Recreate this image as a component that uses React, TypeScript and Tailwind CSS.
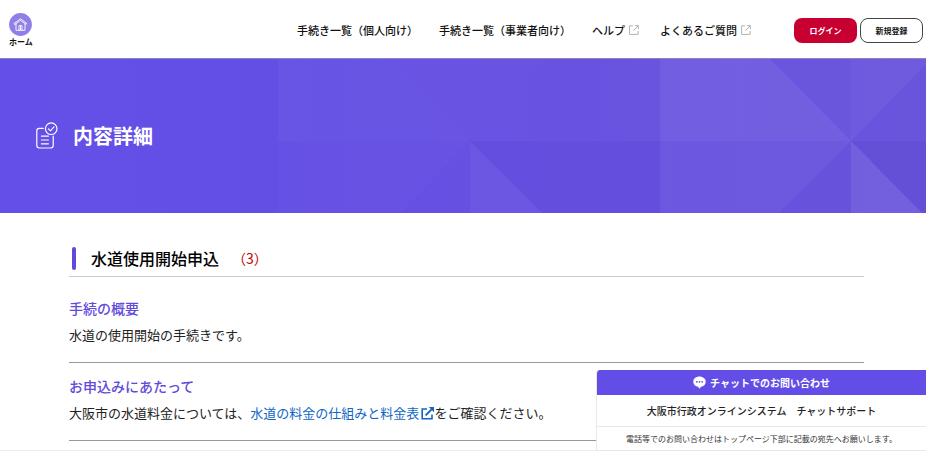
import { ReactNode } from "react"

const navLinks = [
    { label: "手続き一覧（個人向け）", external: false },
    { label: "手続き一覧（事業者向け）", external: false },
    { label: "ヘルプ", external: true },
    { label: "よくあるご質問", external: true },
]

const HomeIcon = () => (
    <svg className="size-[23px]" viewBox="0 0 23 23" fill="none" aria-hidden="true">
        <circle cx="11.5" cy="11.5" r="11.4" fill="#8f7fe6" />
        <g stroke="#fff" strokeWidth="0.9" strokeLinejoin="round" strokeLinecap="round">
            <path d="M5.2 10.4 11.5 5.8l6.3 4.6-.8 1-5.5-4-5.5 4z" />
            <path d="M7 11v6.3h9V11" />
            <path d="M10 17.2v-4.6h3v4.6M11.5 13v4" />
        </g>
    </svg>
)

const TabIcon = () => (
    <svg className="size-[10px]" viewBox="0 0 10 10" fill="none" stroke="#b3b3b3" strokeWidth="1" aria-hidden="true">
        <path d="M4 .8H.6v8.6h8.6V6" />
        <path d="M5.8.6h3.6v3.6M9.2.8 4.2 5.8" />
    </svg>
)

const DocumentIcon = () => (
    <svg className="h-[27px] w-[22px]" viewBox="0 0 22 27" fill="none" stroke="#fff" strokeWidth="1.2" strokeLinecap="round" strokeLinejoin="round" aria-hidden="true">
        <path d="M7.3 6.3H3.2A2.4 2.4 0 0 0 .8 8.7v14.9A2.4 2.4 0 0 0 3.2 26h11.6a2.4 2.4 0 0 0 2.4-2.4v-9.4" />
        <circle cx="15.2" cy="6.7" r="5.8" />
        <path d="m12.4 6.9 2 2 3.6-4" />
        <path d="M5.4 14.2h7M5.4 18h7M5.4 21.8h7" />
    </svg>
)

const LinkIcon = () => (
    <svg className="ml-[2px] inline-block size-[13px] align-[-2px]" viewBox="0 0 13 13" fill="none" stroke="#0f66c4" strokeWidth="1.6" aria-hidden="true">
        <path d="M6 2H1.2v9.8H11V7.6" />
        <path d="m4.6 8.4 6-6" strokeWidth="2" />
        <path d="M7.8 0H13v5.2z" fill="#0f66c4" stroke="none" />
    </svg>
)

const ChatIcon = () => (
    <svg className="size-[13px]" viewBox="0 0 13 13" aria-hidden="true">
        <path d="M6.5.6C3 .6.3 2.8.3 5.7s2.2 4.7 4.7 5.1l1.5 1.9L8 10.8c2.6-.4 4.7-2.3 4.7-5.1S10 .6 6.5.6z" fill="#fff" />
        <circle cx="3.8" cy="5.8" r="0.9" fill="#5f4be0" />
        <circle cx="6.5" cy="5.8" r="0.9" fill="#5f4be0" />
        <circle cx="9.2" cy="5.8" r="0.9" fill="#5f4be0" />
    </svg>
)

const HeroPattern = () => (
    <svg className="absolute inset-0 h-full w-full" viewBox="0 0 926 154" preserveAspectRatio="none" aria-hidden="true">
        <defs>
            <linearGradient id="base" x1="0" x2="1" y1="0" y2="0">
                <stop offset="0" stopColor="#644fe8" />
                <stop offset="0.3" stopColor="#644fe5" />
                <stop offset="1" stopColor="#6954dc" />
            </linearGradient>
        </defs>
        <rect width="926" height="154" fill="url(#base)" />
        <g fill="#fff">
            <path d="M278 0h112l80 82H278z" opacity="0.03" />
            <path d="M278 82h192l-70 72H278z" opacity="0.015" />
            <path d="M390 0h155l-75 82z" opacity="0.02" />
            <path d="M545 0h115v82H470z" opacity="0.015" />
            <path d="M470 82l72 72h-72z" opacity="0.04" />
            <path d="M660 0h110l81 82H660z" opacity="0.07" />
            <path d="M660 82h191l-72 72H660z" opacity="0.035" />
            <path d="M770 0h81v82z" opacity="0.015" />
            <path d="M851 0h75v5l-75 77z" opacity="0.045" />
            <path d="M851 82l71 72h-71z" opacity="0.07" />
        </g>
        <g fill="#2a1a90">
            <path d="M470 82h190v72H542z" opacity="0.04" />
            <path d="M851 82h75v72h-4z" opacity="0.07" />
            <path d="M851 82v72h-72z" opacity="0.02" />
        </g>
    </svg>
)

const Section = ({ title, children }: { title: string; children: ReactNode }) => (
    <section className="border-b border-[#999] pt-3 pb-[11px]">
        <h3 className="text-[14px] leading-[22px] font-medium text-[#5f4bdb]">{title}</h3>
        <p className="text-[13px] leading-8 text-[#222]">{children}</p>
    </section>
)

const Header = () => (
    <header className="flex h-[59px] items-center border-b border-[#8d83c4] bg-white pr-[3px] pl-[9px]">
        <a href="#" className="flex flex-col items-center pt-px">
            <HomeIcon />
            <span className="text-[8px] leading-[11px] font-bold">ホーム</span>
        </a>
        <nav className="ml-auto flex gap-[21px] pt-[2px] text-[11px] leading-4 font-medium whitespace-nowrap">
            {navLinks.map((link) => (
                <a key={link.label} href="#" className="flex items-center gap-1">
                    {link.label}
                    {link.external && <TabIcon />}
                </a>
            ))}
        </nav>
        <div className="ml-[43px] flex gap-[3px] pt-[3px] text-[8px] font-bold">
            <button type="button" className="h-[25px] w-[63px] rounded-lg bg-[#c80032] text-white">ログイン</button>
            <button type="button" className="h-[25px] w-[63px] rounded-lg border border-[#444] bg-white">新規登録</button>
        </div>
    </header>
)

const ChatPanel = () => (
    <aside className="fixed right-0 bottom-[3px] w-[330px] overflow-hidden rounded-tl border-b border-l border-[#e8e8e8] bg-white text-center">
        <h2 className="flex h-[25px] items-center justify-center gap-1 bg-[#624ee6] text-[10px] font-bold text-white">
            <ChatIcon />
            チャットでのお問い合わせ
        </h2>
        <p className="border-b border-[#e8e8e8] text-[10px] leading-[31px] font-medium text-[#222]">大阪市行政オンラインシステム　チャットサポート</p>
        <p className="text-[8px] leading-[23px] text-[#333]">電話等でのお問い合わせはトップページ下部に記載の宛先へお願いします。</p>
    </aside>
)

export default function App() {
    return (
        <div lang="ja" className="bg-white font-['Noto_Sans_CJK_JP',sans-serif] text-[#111]">
            <Header />
            <div className="relative flex h-[154px] items-center bg-[#644fe5] pb-[2px] pl-9">
                <HeroPattern />
                <div className="relative flex items-center gap-[15px]">
                    <DocumentIcon />
                    <h1 className="pt-[2px] text-[20px] leading-7 font-bold text-white">内容詳細</h1>
                </div>
            </div>
            <main className="border-b border-[#ececec] pt-[29px] pr-[62px] pb-[9px] pl-[69px]">
                <div className="mb-2 flex items-center border-b border-[#ccc] pt-1 pb-[6px] pl-[3px]">
                    <span className="h-[23px] w-1 rounded-sm bg-[#5f4bdb]"></span>
                    <h2 className="ml-[15px] text-[16px] leading-6 font-medium text-black">水道使用開始申込</h2>
                    <span className="ml-[13px] text-[14px] leading-6 text-[#c00000]">（3）</span>
                </div>
                <Section title="手続の概要">水道の使用開始の手続きです。</Section>
                <Section title="お申込みにあたって">
                    大阪市の水道料金については、
                    <a href="#" className="text-[#0f66c4]">
                        水道の料金の仕組みと料金表
                        <LinkIcon />
                    </a>
                    をご確認ください。
                </Section>
            </main>
            <ChatPanel />
        </div>
    )
}
